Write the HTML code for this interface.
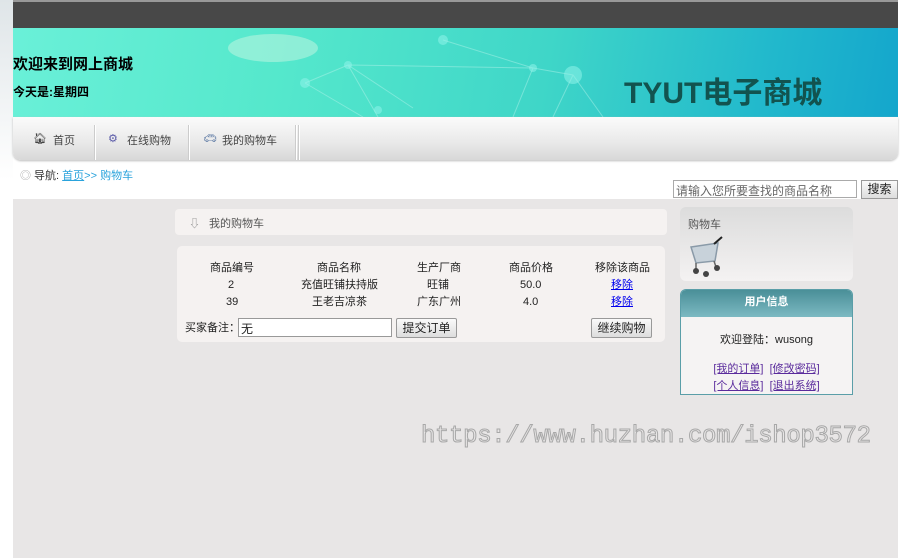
<!DOCTYPE html>
<html><head><meta charset="utf-8"><style>
*{margin:0;padding:0;box-sizing:border-box}
body{width:900px;height:558px;overflow:hidden;background:#fff;font-family:"Liberation Sans","Noto Sans CJK SC",sans-serif;font-size:12px;color:#222;position:relative}
.leftstrip{position:absolute;left:0;top:0;width:13px;height:558px;background:linear-gradient(#dfe5e8,#fff 180px)}
.top{position:absolute;left:13px;top:0;width:885px;height:28px;background:#484848;border-top:2px solid #999}
.banner{position:absolute;left:13px;top:28px;width:885px;height:89px;background:linear-gradient(100deg,#6af0d8 0%,#55e8cc 30%,#3fd6c8 60%,#21b8cc 85%,#14a6cc 100%);overflow:hidden}
.banner svg{position:absolute;left:0;top:0}
.banner .w{position:absolute;left:0;top:25px;font-size:15px;font-weight:bold;color:#000}
.banner .d{position:absolute;left:0;top:55px;font-size:12px;font-weight:bold;color:#000}
.banner .t{position:absolute;left:611px;top:40px;font-size:30px;font-weight:bold;color:#12534f}
.nav{position:absolute;left:13px;top:117px;width:885px;height:43px;background:linear-gradient(#fbfbfb,#e9e9e9 60%,#d8d8d8);border-radius:0 0 8px 8px;box-shadow:0 1px 2px #bbb}
.nav span{position:absolute;top:15px;font-size:11px;color:#444}
.sep{position:absolute;top:8px;width:2px;height:35px;border-left:1px solid #ccc;border-right:1px solid #fff}
.crumb{position:absolute;left:20px;top:167px;font-size:11px;color:#333}
.crumb a{color:#2aa3dc}
.search{position:absolute;left:673px;top:180px;width:184px;height:18px;border:1px solid #aaa;background:#fff;font-size:12px;color:#666;padding:1px 2px}
.sbtn{position:absolute;left:861px;top:180px;width:37px;height:19px;border:1px solid #999;background:linear-gradient(#fafafa,#ddd);font-size:12px;text-align:center;line-height:17px}
.body{position:absolute;left:13px;top:199px;width:885px;height:359px;background:#e8e6e6}
.hd{position:absolute;left:175px;top:209px;width:492px;height:26px;background:#f5f2f1;border-radius:4px}
.hd span{position:absolute;left:34px;top:6px;font-size:11px;color:#555}
.box{position:absolute;left:177px;top:246px;width:488px;height:96px;background:#f5f2f1;border-radius:5px}
.c{position:absolute;font-size:11px;line-height:14px;height:14px;color:#222;text-align:center}
.c a{color:#00e;text-decoration:underline}
.in{position:absolute;left:238px;top:318px;width:154px;height:19px;background:#fff;border:1px solid #999;font-size:12px;padding:1px 2px}
.btn{position:absolute;height:20px;border:1px solid #999;border-radius:2px;background:linear-gradient(#fafafa,#ddd);font-size:12px;text-align:center;line-height:18px}
.cart{position:absolute;left:680px;top:207px;width:173px;height:74px;border-radius:6px;background:linear-gradient(#dcdcdc,#f4f2f2)}
.cart span{position:absolute;left:8px;top:9px;font-size:11px;color:#555}
.ui{position:absolute;left:680px;top:289px;width:173px;height:106px;border:1px solid #5a9ea8;border-radius:6px 6px 0 0;background:#f5f3f3}
.ui .h{height:27px;background:linear-gradient(#4a8f98,#7cb9c2);border-radius:5px 5px 0 0;color:#fff;font-weight:bold;font-size:11px;text-align:center;line-height:24px}
.ui a{color:#5a2b9c;text-decoration:underline}
.ui .l{position:absolute;width:100%;text-align:center;font-size:11px;line-height:14px}
.wm{position:absolute;left:421px;top:423px;font-family:"Liberation Mono","DejaVu Sans Mono",monospace;font-size:24px;color:transparent;-webkit-text-stroke:1px #a8a8a8;letter-spacing:-0.35px}
</style></head><body>
<div class="leftstrip"></div>
<div class="top"></div>
<div class="banner">
<svg width="885" height="89"><g stroke="#b8f4ec" stroke-width="1" fill="none" opacity=".45"><path d="M292 55 L335 37 L520 40 L560 47 L590 89 M335 37 L365 89 M335 37 L400 80 M292 55 L350 89 M430 12 L520 40 L500 89 M560 47 L540 89"/></g>
<g fill="#8ff4ea" opacity=".55"><circle cx="292" cy="55" r="5"/><circle cx="335" cy="37" r="4"/><circle cx="520" cy="40" r="4"/><circle cx="560" cy="47" r="9"/><circle cx="365" cy="82" r="4"/><circle cx="430" cy="12" r="5"/></g>
<ellipse cx="260" cy="20" rx="45" ry="14" fill="#e6fbe8" opacity=".4"/></svg>
<div class="w">欢迎来到网上商城</div><div class="d">今天是:星期四</div><div class="t">TYUT电子商城</div></div>
<div class="nav">
<span style="left:20px">🏠︎</span><span style="left:40px">首页</span>
<div class="sep" style="left:81px"></div>
<span style="left:95px;color:#5a5aa8">⚙</span><span style="left:114px">在线购物</span>
<div class="sep" style="left:175px"></div>
<span style="left:190px;color:#4a6a9a">🚗︎</span><span style="left:209px">我的购物车</span>
<div class="sep" style="left:282px"></div><div class="sep" style="left:285px"></div>
</div>
<div class="crumb"><span style="color:#aaa">◎</span> 导航: <a style="text-decoration:underline">首页</a><a>&gt;&gt; 购物车</a></div>
<div class="search">请输入您所要查找的商品名称</div><div class="sbtn">搜索</div>
<div class="body"></div>
<div class="hd"><span style="left:14px;color:#888">⇩</span><span>我的购物车</span></div>
<div class="box"></div>
<div class="c" style="left:210px;top:261px">商品编号</div><div class="c" style="left:317px;top:261px">商品名称</div><div class="c" style="left:417px;top:261px">生产厂商</div><div class="c" style="left:509px;top:261px">商品价格</div><div class="c" style="left:595px;top:261px">移除该商品</div>
<div class="c" style="left:228px;top:278px">2</div><div class="c" style="left:301px;top:278px">充值旺铺扶持版</div><div class="c" style="left:427px;top:278px">旺铺</div><div class="c" style="left:520px;top:278px">50.0</div><div class="c" style="left:611px;top:278px"><a>移除</a></div>
<div class="c" style="left:226px;top:295px">39</div><div class="c" style="left:312px;top:295px">王老吉凉茶</div><div class="c" style="left:417px;top:295px">广东广州</div><div class="c" style="left:523px;top:295px">4.0</div><div class="c" style="left:611px;top:295px"><a>移除</a></div>
<div class="c" style="left:185px;top:321px">买家备注：</div>
<div class="in">无</div>
<div class="btn" style="left:396px;top:318px;width:61px">提交订单</div>
<div class="btn" style="left:591px;top:318px;width:61px">继续购物</div>
<div class="cart"><span>购物车</span>
<svg style="position:absolute;left:8px;top:28px" width="40" height="42"><g stroke="#8a9aa8" stroke-width="1.5" fill="#c8d2da"><path d="M3 12 L30 8 L27 26 L8 28 Z"/></g><path d="M26 9 L34 2" stroke="#222" stroke-width="2"/><path d="M8 28 L8 34 M26 26 L28 32" stroke="#666" stroke-width="1.5"/><circle cx="8" cy="36" r="3" fill="#444"/><circle cx="18" cy="39" r="3" fill="#444"/><circle cx="29" cy="33" r="3" fill="#444"/></svg></div>
<div class="ui"><div class="h">用户信息</div>
<div class="l" style="top:43px">欢迎登陆：wusong</div>
<div class="l" style="top:72px"><a>[我的订单]</a>&nbsp; <a>[修改密码]</a></div>
<div class="l" style="top:89px"><a>[个人信息]</a>&nbsp; <a>[退出系统]</a></div></div>
<div class="wm">https://www.huzhan.com/ishop3572</div>
</body></html>
